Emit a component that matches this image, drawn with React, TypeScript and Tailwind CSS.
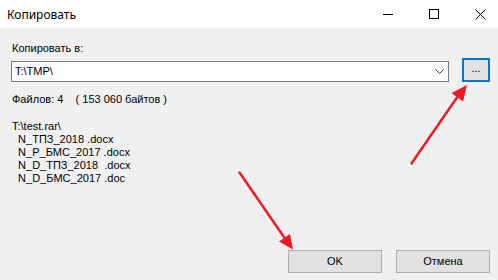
import React from "react";

const files = ["N_ТПЗ_2018 .docx", "N_Р_БМС_2017 .docx", "N_D_ТПЗ_2018  .docx", "N_D_БМС_2017 .doc"];

function TitleBar() {
  return (
    <div className="flex h-[28px] items-center bg-white">
      <span className="pl-[7px] text-[12px] text-black [font-family:'Noto_Sans',sans-serif]">Копировать</span>
      <div className="-mr-[5px] ml-auto flex h-full items-center">
        {/* minimize */}
        <div className="flex h-full w-[46px] items-center justify-center">
          <svg width="10" height="10" viewBox="0 0 10 10">
            <path d="M0 5.5H10" stroke="#000" strokeWidth="1" />
          </svg>
        </div>
        {/* maximize */}
        <div className="flex h-full w-[46px] items-center justify-center">
          <svg width="10" height="10" viewBox="0 0 10 10">
            <rect x="0.5" y="0.5" width="9" height="9" fill="none" stroke="#000" strokeWidth="1" />
          </svg>
        </div>
        {/* close */}
        <div className="flex h-full w-[46px] items-center justify-center">
          <svg width="11" height="11" viewBox="0 0 11 11">
            <path d="M0.5 0.5L10.5 10.5M10.5 0.5L0.5 10.5" stroke="#000" strokeWidth="1" />
          </svg>
        </div>
      </div>
    </div>
  );
}

export default function App() {
  return (
    <div className="relative flex h-[280px] w-[498px] flex-col overflow-hidden bg-[#f0f0f0] text-[11px] leading-[13px] text-black [font-family:'Liberation_Sans',Arial,sans-serif]">
      <TitleBar />

      <div className="flex flex-1 flex-col pl-[12px] pr-[8px]">
        <div className="mt-[14px]">Копировать в:</div>

        <div className="mt-[3px] flex items-start">
          {/* combo box */}
          <div className="-ml-[1px] mt-[3px] flex h-[21px] w-[438px] shrink-0 items-center border border-[#7a7a7a] bg-white pl-[3px]">
            <span>T:\TMP\</span>
            <svg className="ml-auto mr-[4px]" width="9" height="5" viewBox="0 0 9 5">
              <path d="M0.5 0.5L4.5 4.5L8.5 0.5" fill="none" stroke="#333" strokeWidth="1" />
            </svg>
          </div>
          {/* browse button */}
          <div className="ml-[13px] flex h-[24px] w-[28px] shrink-0 items-center justify-center border-2 border-[#0078d7] bg-[#e1e1e1] pb-[3px]">
            ...
          </div>
        </div>

        <div className="mt-[11px] whitespace-pre">Файлов: 4    ( 153 060 байтов )</div>

        <div className="mt-[14px] flex flex-col whitespace-pre">
          <span>T:\test.rar\</span>
          {files.map((f) => (
            <span key={f}>{"  " + f}</span>
          ))}
        </div>

        <div className="mt-auto mb-[7px] flex justify-end gap-[14px]">
          <div className="flex h-[23px] w-[94px] items-center justify-center border border-[#adadad] bg-[#e1e1e1]">OK</div>
          <div className="flex h-[23px] w-[94px] items-center justify-center border border-[#adadad] bg-[#e1e1e1]">Отмена</div>
        </div>
      </div>

      {/* red annotation arrows */}
      <svg className="pointer-events-none absolute left-0 top-0" width="498" height="280" viewBox="0 0 498 280">
        <path d="M411.5 163.5L458 96" stroke="#ed1c24" strokeWidth="2.5" strokeLinecap="round" />
        <path d="M467 85L451.5 93L463 101.5Z" fill="#ed1c24" />
        <path d="M239.5 172.5L286 240" stroke="#ed1c24" strokeWidth="2.5" strokeLinecap="round" />
        <path d="M293 249.5L279 241.5L290 234Z" fill="#ed1c24" />
      </svg>
    </div>
  );
}
